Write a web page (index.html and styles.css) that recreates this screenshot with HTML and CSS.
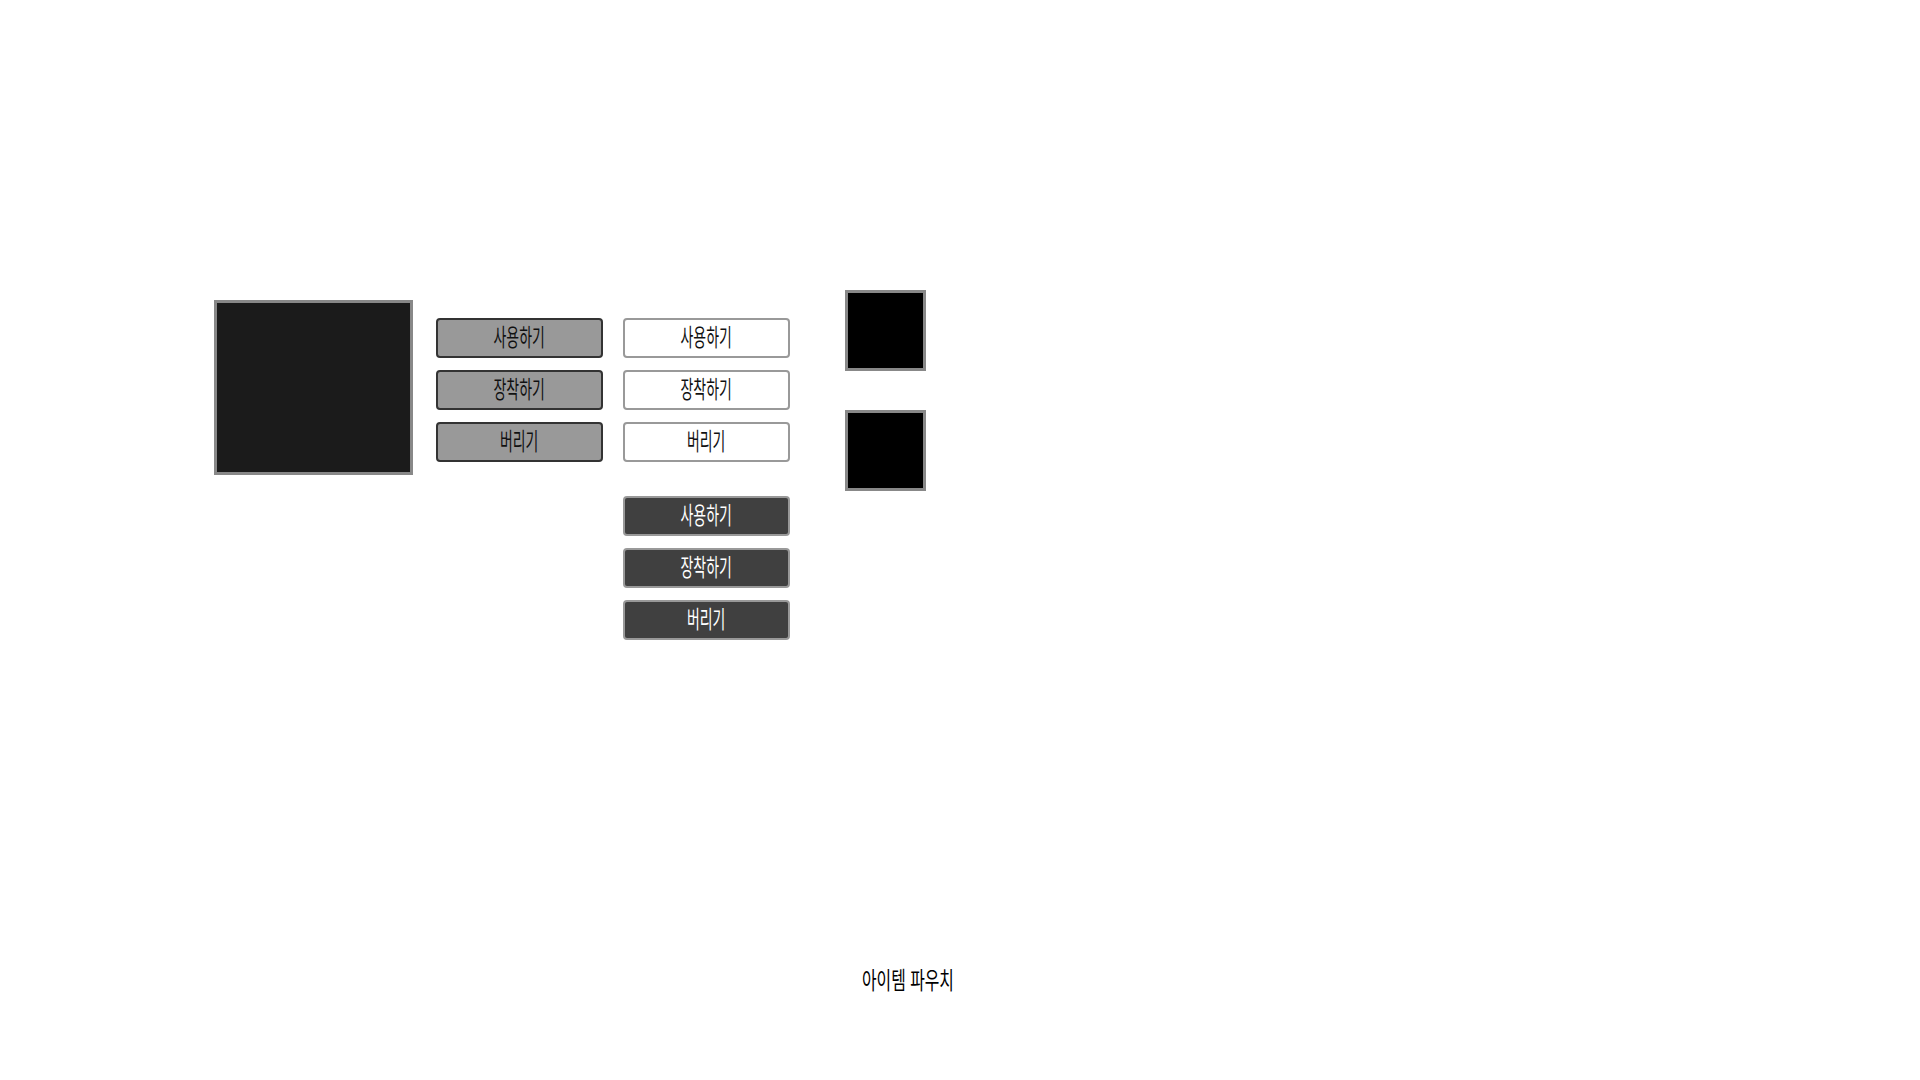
FILE: index.html
```html
<!DOCTYPE html>
<html lang="ko">
<head>
  <meta charset="UTF-8" />
  <meta name="viewport" content="width=device-width, initial-scale=1.0" />
  <title>아이템 파우치</title>
  <link rel="stylesheet" href="styles.css">
</head>
<body>
  <div class="stage">
    <div class="preview"></div>

    <div class="btn-col">
      <button class="btn btn-gray"><span class="lbl">사용하기</span></button>
      <button class="btn btn-gray"><span class="lbl">장착하기</span></button>
      <button class="btn btn-gray"><span class="lbl">버리기</span></button>
    </div>

    <div class="btn-col">
      <button class="btn btn-white"><span class="lbl">사용하기</span></button>
      <button class="btn btn-white"><span class="lbl">장착하기</span></button>
      <button class="btn btn-white"><span class="lbl">버리기</span></button>
      <div class="btn-group-dark">
        <button class="btn btn-dark"><span class="lbl">사용하기</span></button>
        <button class="btn btn-dark"><span class="lbl">장착하기</span></button>
        <button class="btn btn-dark"><span class="lbl">버리기</span></button>
      </div>
    </div>

    <div class="slot-col">
      <div class="slot"></div>
      <div class="slot"></div>
    </div>
  </div>

  <div class="pouch-title"><span class="lbl">아이템 파우치</span></div>
</body>
</html>
```

FILE: styles.css
```css
* { margin: 0; padding: 0; box-sizing: border-box; }
body {
  font-family: "Noto Sans CJK KR", "Noto Sans", sans-serif;
  background: #fff;
  color: #111;
  width: 1920px;
  height: 1080px;
  overflow: hidden;
}
.stage {
  display: flex;
  align-items: flex-start;
  padding: 290px 0 0 214px;
  height: 967px;
}
.preview {
  width: 199px;
  height: 175px;
  margin-top: 10px;
  background: #1b1b1b;
  border: 3px solid #888;
}
.btn-col {
  display: flex;
  flex-direction: column;
  gap: 12px;
  margin-top: 28px;
  margin-left: 23px;
  width: 167px;
}
.btn-col + .btn-col {
  margin-left: 20px;
}
.btn {
  height: 40px;
  width: 167px;
  border-radius: 4px;
  display: flex;
  align-items: center;
  justify-content: center;
  padding-bottom: 4px;
  font-family: inherit;
  overflow: hidden;
}
.lbl {
  display: inline-block;
  font-size: 24px;
  line-height: 24px;
  transform: scaleX(0.58);
  white-space: nowrap;
}
.btn-gray {
  background: #999;
  border: 2px solid #333;
  color: #111;
}
.btn-white {
  background: #fff;
  border: 2px solid #999;
  color: #111;
}
.btn-dark {
  background: #404040;
  border: 2px solid #999;
  color: #fff;
}
.btn-group-dark {
  display: flex;
  flex-direction: column;
  gap: 12px;
  margin-top: 22px;
}
.slot-col {
  display: flex;
  flex-direction: column;
  gap: 39px;
  margin-left: 55px;
}
.slot {
  width: 81px;
  height: 81px;
  background: #000;
  border: 3px solid #888;
}
.pouch-title {
  padding-left: 862px;
  width: 1000px;
}
.pouch-title .lbl {
  font-size: 24px;
  transform: scaleX(0.66);
  transform-origin: left center;
  color: #000;
}
```
